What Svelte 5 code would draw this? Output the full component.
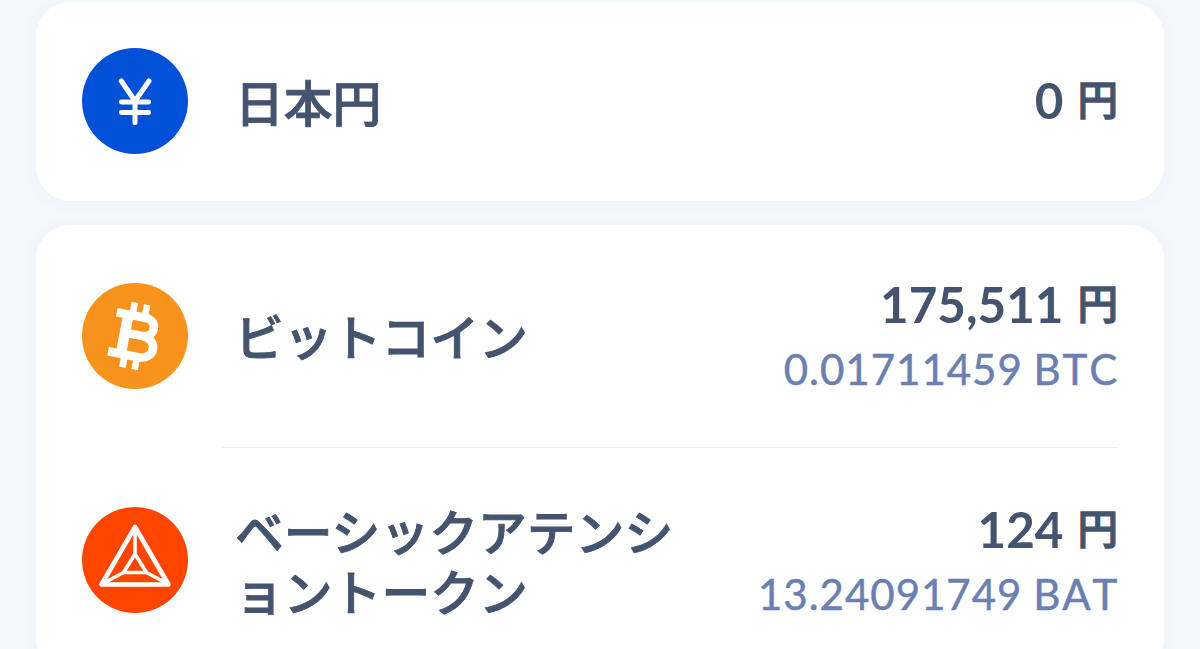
<script lang="ts">
	const groups = [
		[{ id: 'jpy', name: '日本円', yen: '0', amount: '', ticker: '' }],
		[
			{ id: 'btc', name: 'ビットコイン', yen: '175,511', amount: '0.01711459', ticker: 'BTC' },
			{ id: 'bat', name: 'ベーシックアテンショントークン', yen: '124', amount: '13.24091749', ticker: 'BAT' },
		],
	];
</script>

<main class="wallet">
	{#each groups as assets}
		<ul class="card">
			{#each assets as asset (asset.id)}
				<li class="asset {asset.id}">
					<svg class="icon" viewBox="0 0 106 106" aria-hidden="true">
						<circle cx="53" cy="53" r="53" />
						{#if asset.id === 'jpy'}
							<g fill="none" stroke="#fff" stroke-width="5" stroke-linecap="round" stroke-linejoin="round">
								<path d="M39.3 33 L53 53 L67 33 M53 53 V74.5" />
								<path stroke-width="4.8" d="M39.3 54 H66.7 M39.3 64.5 H66.7" />
							</g>
						{:else if asset.id === 'btc'}
							<g transform="translate(52.5 53) rotate(11)" fill="none" stroke="#fff">
								<path stroke-width="6.6" d="M-6 -33 V-22 M6.5 -33 V-22 M-6 22 V33 M6.5 22 V33" />
								<path
									stroke-width="8.6"
									d="M-22 -20 H7 C21 -20 21 -1.5 7 -1.5 H-9 M7 -1.5 C25 -1.5 25 20 8 20 H-23"
								/>
								<path stroke-width="10.5" d="M-10 -21 V21" />
							</g>
						{:else}
							<g fill="none" stroke="#fff" stroke-width="3.6" stroke-linejoin="round">
								<path stroke-width="4.6" d="M53 20 L19.5 77.5 H86.5 Z" />
								<path d="M53 47 L41.5 65.5 H64.5 Z M53 21 V48 M41.5 65.5 L20 77 M64.5 65.5 L86 77" />
							</g>
						{/if}
					</svg>
					<div class="body">
						<h2 class="name">{asset.name}</h2>
						<div class="value">
							<p class="yen">{asset.yen}<span class="unit">円</span></p>
							{#if asset.amount}
								<p class="amount">{asset.amount} <span class="ticker">{asset.ticker}</span></p>
							{/if}
						</div>
					</div>
				</li>
			{/each}
		</ul>
	{/each}
</main>

<style>
	:global(body) {
		margin: 0;
		background: #f4f8fd;
	}

	.wallet {
		box-sizing: border-box;
		height: 649px;
		overflow: hidden;
		padding: 2px 36px 0;
		display: flex;
		flex-direction: column;
		gap: 24px;
		font-family: Lato, 'Noto Sans CJK JP', sans-serif;
		color: #44546f;
	}

	.card {
		flex-shrink: 0;
		list-style: none;
		margin: 0;
		padding: 0 46px;
		background: #fff;
		border-radius: 34px;
		box-shadow: 0 2px 20px rgba(70, 85, 120, 0.035);
	}

	.asset {
		display: flex;
		align-items: center;
		gap: 34px;
		height: 226px;
	}
	.jpy {
		height: 198px;
		padding-bottom: 1px;
	}
	.btc { height: 222px; }

	.icon {
		width: 106px;
		height: 106px;
		flex-shrink: 0;
	}
	.jpy circle { fill: #0150d8; }
	.btc circle { fill: #f7931a; }
	.bat circle { fill: #ff4500; }

	.body {
		box-sizing: border-box;
		flex: 1;
		height: 100%;
		display: flex;
		align-items: center;
		justify-content: space-between;
		padding-left: 13px;
	}
	.bat .body { border-top: 1px solid #ebedf0; }

	.name {
		width: 450px;
		margin: 0 0 2px;
		font-family: 'Noto Sans CJK JP', sans-serif;
		font-size: 48.8px;
		font-weight: 500;
		line-height: 60px;
		word-break: break-all;
		line-break: anywhere;
		-webkit-text-stroke: 0.9px currentColor;
	}
	.jpy .name { margin-bottom: 0; }

	.value { text-align: right; }
	.value p {
		margin: 0;
		white-space: nowrap;
	}
	.yen {
		font-size: 49.4px;
		font-weight: 700;
		line-height: 66px;
	}
	.jpy .yen { padding-bottom: 3px; }
	.unit {
		margin-left: 14px;
		font-family: 'Noto Sans CJK JP', sans-serif;
		font-size: 40.5px;
		font-weight: 500;
		line-height: 1;
		vertical-align: 4px;
		-webkit-text-stroke: 1.3px currentColor;
	}
	.amount {
		font-size: 42px;
		line-height: 64px;
		letter-spacing: 1px;
		color: #6b7fb0;
		-webkit-text-stroke: 0.5px currentColor;
	}
	.ticker {
		margin: 0 -1px 0 -1px;
		letter-spacing: 1.8px;
		font-kerning: none;
	}
</style>
